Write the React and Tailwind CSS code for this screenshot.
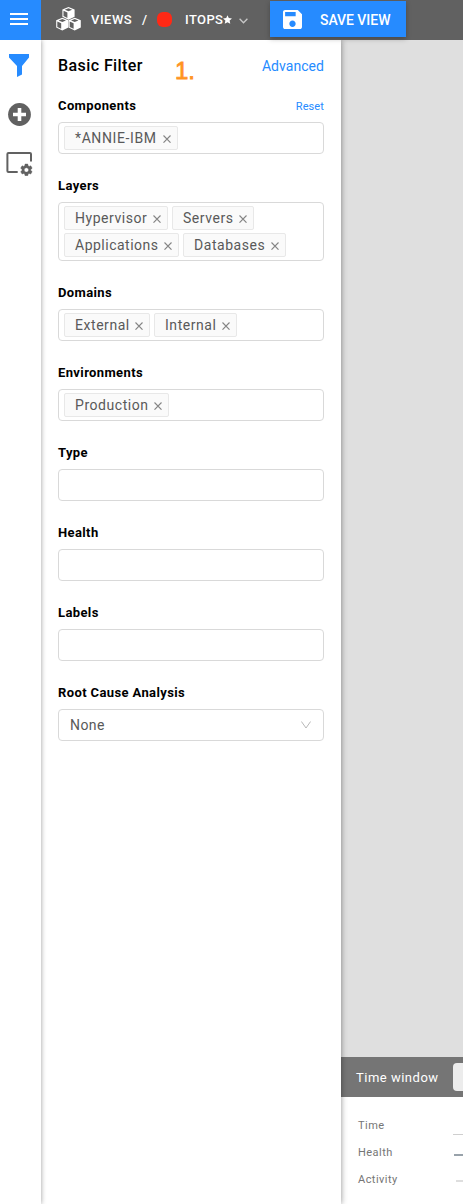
import React from "react";

function CloseIcon() {
  return (
    <svg className="mt-px h-2 w-2 shrink-0" viewBox="0 0 8 8" fill="none" stroke="#858585" strokeWidth="1.1">
      <path d="M0.5 0.5 L7.5 7.7 M7.5 0.5 L0.5 7.7" />
    </svg>
  );
}

function Tag({ label, width, tracking = "tracking-[0.55px]" }) {
  return (
    <span
      className={`flex h-6 ${width} ${tracking} items-center justify-between rounded-[2px] border border-[#e8e8e8] bg-[#fafafa] pr-[6px] pl-[10px] text-[14px] leading-[22px] whitespace-nowrap text-[#595959]`}
    >
      {label}
      <CloseIcon />
    </span>
  );
}

function Field({ label, action, height = "h-8", children }) {
  return (
    <section className="mb-[21px]">
      <div className="flex h-[27px] items-start justify-between pt-px">
        <h3 className="text-[13px] leading-5 font-bold tracking-[0.38px] text-black">{label}</h3>
        {action}
      </div>
      <div
        className={`flex ${height} flex-wrap content-start gap-x-1 gap-y-[3px] rounded-[4px] border border-[#d9d9d9] bg-white px-[5px] py-[3px]`}
      >
        {children}
      </div>
    </section>
  );
}

function Cube({ x, y }) {
  return (
    <g transform={`translate(${x} ${y})`}>
      <path d="M0 -6.4 L6.1 -4 L6.1 3.400 L0 6.400 L-6.1 3.400 L-6.1 -4 Z" fill="#fff" />
      <path d="M0 -5.2 L3.7 -3.700 L0 -2.1 L-3.7 -3.700 Z" fill="#616161" />
      <path d="M-5 -2.7 L-1.1 -1 V4.600 L-5 2.700 Z" fill="#616161" />
    </g>
  );
}

function Header() {
  return (
    <header className="flex h-10 shrink-0 bg-[#616161] text-white">
      <div className="flex w-[41px] shrink-0 items-start bg-[#268bff] pt-[13px] pl-[10px]">
        <svg className="h-3 w-[18px]" viewBox="0 0 18 12" fill="#fff">
          <path d="M0 0h18v2H0zM0 5h18v2H0zM0 10h18v2H0z" />
        </svg>
      </div>
      <div className="flex h-10 items-center pl-[15px] text-[13px] font-medium">
        <svg className="-mt-[3px] h-6 w-[25px]" viewBox="0 0 25 24">
          <Cube x={12.5} y={6.4} />
          <Cube x={6.3} y={17.2} />
          <Cube x={18.7} y={17.2} />
        </svg>
        <span className="ml-[10px] w-[51px] tracking-[0.5px]">VIEWS</span>
        <span className="w-[15px]">/</span>
        <span className="-mt-[2px] h-[15px] w-[15px] rounded-[6px] bg-[#ff2915]" />
        <span className="ml-[13px] w-[38px] tracking-[0.4px]">ITOPS</span>
        <svg className="-mt-px h-[9px] w-[9px]" viewBox="0 0 24 23" fill="#fff">
          <path d="M12 0l3.4 7.6 8.6.9-6.4 5.8 1.8 8.5-7.4-4.3-7.4 4.3 1.8-8.5L0 8.500l8.600-.9z" />
        </svg>
        <svg className="mt-[2px] ml-[7px] h-[6px] w-[9px]" viewBox="0 0 9 6" fill="none" stroke="#c8c8c8" strokeWidth="1.3">
          <path d="M.6.7l3.9 4 3.900-4" />
        </svg>
      </div>
      <button className="mt-px ml-[22px] flex h-9 w-[136px] shrink-0 items-center bg-[#268bff] pl-[13px] text-[14px] font-medium shadow-[0_2px_5px_rgba(0,0,0,0.25)]">
        <svg className="h-[19px] w-[19px]" viewBox="3 3 18 18" fill="#fff">
          <path d="M17 3H5c-1.110 0-2 .9-2 2v14c0 1.100.89 2 2 2h14c1.100 0 2-.9 2-2V7l-4-4zm-5 16c-1.660 0-3-1.340-3-3s1.340-3 3-3 3 1.340 3 3-1.340 3-3 3zm3-10H5V5h10v4z" />
        </svg>
        <span className="ml-[18px] pt-[2px] tracking-[-0.05px]">SAVE VIEW</span>
      </button>
    </header>
  );
}

function Rail() {
  return (
    <nav className="z-20 flex w-[41px] shrink-0 flex-col bg-white shadow-[0_0_5px_rgba(0,0,0,0.4)]">
      <svg className="mt-[14px] ml-[9px] h-[23px] w-5" viewBox="0 0 20 23" fill="#268bff">
        <path d="M0 0h20v3.500l-7 8.500v8.500L8 23V12L0 3.500z" />
      </svg>
      <svg className="mt-[26px] ml-2 h-[23px] w-[23px]" viewBox="0 0 23 23">
        <circle cx="11.500" cy="11.500" r="11.400" fill="#616161" />
        <path d="M9.700 5h3.600v4.700H18v3.600h-4.700V18H9.700v-4.700H5V9.700h4.700z" fill="#fff" />
      </svg>
      <svg className="mt-[26px] ml-[6px] h-6 w-[27px]" viewBox="0 0 27 24">
        <path d="M11.700 20H2.500Q1.400 20 1.400 18.900V2.100Q1.400 1 2.500 1H23.900Q25 1 25 2.100V9.500" fill="none" stroke="#616161" strokeWidth="2" />
        <g transform="translate(13.100 10.600) scale(.61)" fill="#616161" stroke="#616161" strokeWidth="0.7">
          <path d="M19.140 12.940c.04-.3.060-.61.060-.94 0-.32-.02-.64-.07-.94l2.030-1.580c.18-.14.230-.41.120-.61l-1.920-3.320c-.12-.22-.37-.29-.59-.22l-2.390.96c-.5-.38-1.030-.7-1.620-.94l-.36-2.540c-.04-.24-.24-.41-.48-.41h-3.840c-.24 0-.43.170-.47.410l-.36 2.540c-.59.240-1.130.570-1.620.940l-2.390-.96c-.22-.08-.47 0-.59.220L2.740 8.870c-.12.210-.08.470.120.610l2.030 1.580c-.05.300-.09.630-.09.940s.02.640.070.940l-2.030 1.580c-.18.140-.23.410-.12.610l1.920 3.320c.12.220.370.290.590.220l2.390-.96c.5.380 1.030.700 1.620.940l.36 2.540c.05.240.240.410.480.410h3.840c.24 0 .440-.17.470-.41l.36-2.540c.59-.24 1.130-.56 1.620-.94l2.390.96c.22.080.470 0 .590-.22l1.920-3.320c.12-.22.070-.47-.12-.61l-2.010-1.580zM12 15.600c-1.980 0-3.600-1.620-3.600-3.600s1.620-3.600 3.600-3.600 3.600 1.620 3.600 3.600-1.620 3.600-3.600 3.600z" />
        </g>
      </svg>
    </nav>
  );
}

function FilterPanel() {
  return (
    <aside className="z-10 w-[300px] shrink-0 bg-white pr-[17px] pl-[17px] shadow-[0_0_6px_rgba(0,0,0,0.45)]">
      <div className="flex h-[55px] items-start pt-[14px]">
        <h2 className="w-[117px] text-[16px] leading-6 font-medium tracking-[0.42px] text-black">Basic Filter</h2>
        <span className="pt-[5px] font-['Liberation_Sans'] text-[24px] leading-6 text-[#ff941f] [-webkit-text-stroke:0.8px_#ff941f]">1.</span>
        <a className="ml-auto text-[14px] leading-6 tracking-[0.05px] text-[#268bff]">Advanced</a>
      </div>
      <Field label="Components" action={<a className="pt-px text-[11px] leading-5 tracking-[0.1px] text-[#268bff]">Reset</a>}>
        <Tag label="*ANNIE-IBM" width="w-[114px]" tracking="tracking-[0.6px]" />
      </Field>
      <Field label="Layers" height="h-[59px]">
        <Tag label="Hypervisor" width="w-[104px]" />
        <Tag label="Servers" width="w-[82px]" />
        <Tag label="Applications" width="w-[115px]" tracking="tracking-[0.5px]" />
        <Tag label="Databases" width="w-[103px]" />
      </Field>
      <Field label="Domains">
        <Tag label="External" width="w-[86px]" />
        <Tag label="Internal" width="w-[83px]" />
      </Field>
      <Field label="Environments">
        <Tag label="Production" width="w-[105px]" />
      </Field>
      <Field label="Type" />
      <Field label="Health" />
      <Field label="Labels" />
      <Field label="Root Cause Analysis">
        <div className="flex h-6 w-full items-center justify-between pr-[7px] pl-[6px] text-[14px] tracking-[0.4px] text-[#595959]">
          None
          <svg className="h-2 w-[10px]" viewBox="0 0 10 8" fill="none" stroke="#b8b8b8" strokeWidth="1">
            <path d="M.4.500L5 7l4.600-6.500" />
          </svg>
        </div>
      </Field>
    </aside>
  );
}

function Workspace() {
  return (
    <main className="flex min-w-0 grow flex-col bg-[#dfdfdf]">
      <div className="grow" />
      <div className="flex h-10 items-center justify-between bg-[#757575] pl-[15px] text-[13px] tracking-[0.5px] text-white">
        <span className="pt-px">Time window</span>
        <span className="h-7 w-[10px] rounded-l-[4px] bg-[#ececec]" />
      </div>
      <div className="h-[107px] bg-white pt-[15px] pl-[17px] text-[11px] leading-[27px] tracking-[0.45px] text-[#757575]">
        <div className="flex h-[27px] justify-between">
          Time
          <span className="mt-[22px] h-px w-[10px] bg-[#cfcfcf]" />
        </div>
        <div className="flex h-[27px] justify-between">
          Health
          <span className="mt-[15px] h-[2px] w-[9px] bg-[#98a2aa]" />
        </div>
        <div className="flex h-[27px] justify-between">
          Activity
          <span className="mt-[14px] h-[2px] w-[7px] bg-[#dedede]" />
        </div>
      </div>
    </main>
  );
}

export default function App() {
  return (
    <div className="flex h-[1204px] w-[463px] flex-col overflow-hidden bg-white font-['Roboto',sans-serif]">
      <div className="z-30 flex flex-col">
        <Header />
      </div>
      <div className="flex min-h-0 grow">
        <Rail />
        <FilterPanel />
        <Workspace />
      </div>
    </div>
  );
}
